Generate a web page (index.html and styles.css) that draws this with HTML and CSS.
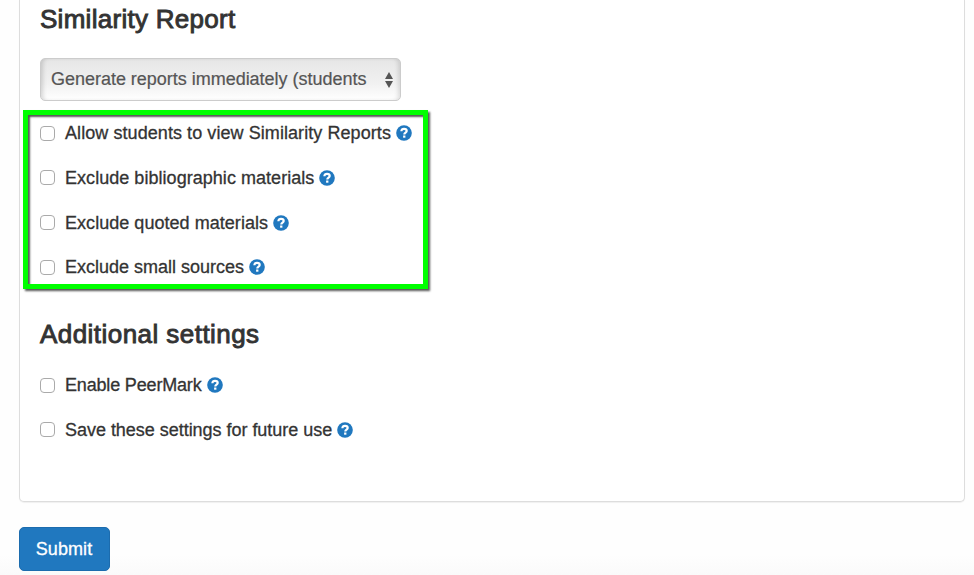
FILE: index.html
```html
<!DOCTYPE html>
<html lang="en">
  <head>
    <meta charset="utf-8" />
    <meta name="viewport" content="width=device-width, initial-scale=1.0" />
    <title>Assignment Settings</title>
    <link rel="stylesheet" href="styles.css">
  </head>
  <body>
    <svg class="sprite" aria-hidden="true">
      <symbol id="help" viewBox="0 0 16 16">
        <circle cx="8" cy="8" r="7.8" fill="#2078bf" />
        <path d="M5.4 6.3C5.4 4.6 6.5 3.8 8 3.8s2.7.8 2.7 2.2c0 1.6-2.4 1.6-2.4 3.4" fill="none" stroke="#fff" stroke-width="2.2" />
        <path d="M7.1 10.5h2.3v2.2H7.1z" fill="#fff" />
      </symbol>
    </svg>
    <form id="settings">
      <main class="panel">
        <h2 class="report-title">Similarity Report</h2>
        <button type="button" class="select">
          <span>Generate reports immediately (students</span>
          <svg class="arrows" viewBox="0 0 8 16"><path d="M4 0l4 7H0zM0 9h8l-4 7z" fill="#555" /></svg>
        </button>
        <div class="options highlight">
          <label class="view-reports"><input type="checkbox" /><span>Allow students to view Similarity Reports</span><svg class="help"><use href="#help" /></svg></label>
          <label class="exclude"><input type="checkbox" /><span>Exclude bibliographic materials</span><svg class="help"><use href="#help" /></svg></label>
          <label class="exclude"><input type="checkbox" /><span>Exclude quoted materials</span><svg class="help"><use href="#help" /></svg></label>
          <label><input type="checkbox" /><span>Exclude small sources</span><svg class="help"><use href="#help" /></svg></label>
        </div>
        <h2 class="settings-title">Additional settings</h2>
        <div class="options">
          <label class="peermark"><input type="checkbox" /><span>Enable PeerMark</span><svg class="help"><use href="#help" /></svg></label>
          <label class="save"><input type="checkbox" /><span>Save these settings for future use</span><svg class="help"><use href="#help" /></svg></label>
        </div>
      </main>
      <button type="submit" class="submit">Submit</button>
    </form>
  </body>
</html>
```

FILE: styles.css
```css
* {
  box-sizing: border-box;
}

body {
  margin: 0;
  height: 575px;
  overflow: hidden;
  font-family: "Liberation Sans", Arial, sans-serif;
  font-size: 18px;
  color: #333;
  background: linear-gradient(#fefefe 555px, #fafafa 575px);
}

.sprite {
  display: none;
}

.panel {
  width: 946px;
  height: 502px;
  margin-left: 19px;
  padding: 4px 20px 0;
  background-color: #fff;
  border: 1px solid #ddd;
  border-top: none;
  border-radius: 0 0 5px 5px;
  box-shadow: 0 1px 1px rgba(0, 0, 0, 0.06);
}

h2 {
  margin: 0;
  font-size: 26px;
  font-weight: normal;
  line-height: 30px;
  white-space: nowrap;
  -webkit-text-stroke: 0.9px #333;
}

.report-title {
  letter-spacing: 0.28px;
}

.select {
  display: flex;
  align-items: center;
  justify-content: space-between;
  width: 361px;
  height: 43px;
  margin-top: 24px;
  padding: 0 7px 0 10px;
  font: inherit;
  letter-spacing: -0.02px;
  color: #555;
  white-space: nowrap;
  background: linear-gradient(#e6e6e6, #f1f1f1 60%, #fff);
  border: 1px solid #ccc;
  border-radius: 5px;
  box-shadow: inset 4px 0 4px -2px rgba(0, 0, 0, 0.15), inset -4px 0 4px -2px rgba(0, 0, 0, 0.12);
  -webkit-text-stroke: 0.2px #555;
}

.arrows {
  width: 8px;
  height: 16px;
}

.options {
  display: flex;
  flex-direction: column;
  gap: 22.8px;
}

.highlight {
  width: 405px;
  height: 179px;
  margin: 9px 0 0 -17px;
  padding: 7px 0 0 12px;
  border: 5px solid #0f0;
  box-shadow: 2px 2px 2px #555, inset 2px 2px 2px #555;
}

label {
  display: flex;
  align-items: center;
  height: 22px;
  white-space: nowrap;
}

label span {
  -webkit-text-stroke: 0.3px #333;
}

.view-reports {
  letter-spacing: 0.07px;
}

.exclude {
  letter-spacing: 0.04px;
}

.exclude span,
.save span {
  padding-top: 1px;
}

.peermark {
  letter-spacing: -0.17px;
}

.save {
  letter-spacing: -0.03px;
}

input {
  appearance: none;
  width: 15px;
  height: 15px;
  margin: 0 10px 0 0;
  background-color: #fff;
  border: 1px solid #aaa;
  border-radius: 4px;
}

.help {
  width: 16px;
  height: 16px;
  margin-left: 5px;
}

.settings-title {
  margin: 30px 0 25px;
  letter-spacing: 0.45px;
}

.submit {
  display: block;
  width: 91px;
  height: 44px;
  margin: 25px 0 0 19px;
  padding: 0 1px 0 0;
  font: inherit;
  letter-spacing: 0.1px;
  color: #fff;
  background-color: #2078bf;
  border: 1px solid #1c6cae;
  border-radius: 5px;
  -webkit-text-stroke: 0.3px #fff;
}
```
